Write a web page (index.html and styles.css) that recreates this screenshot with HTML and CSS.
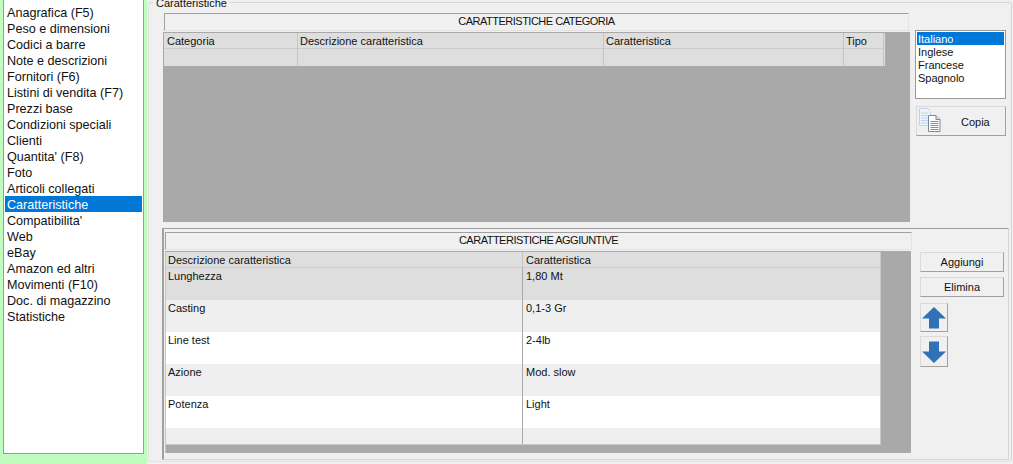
FILE: index.html
```html
<!DOCTYPE html>
<html lang="it">
<head>
<meta charset="utf-8">
<title>Caratteristiche</title>
<link rel="stylesheet" href="styles.css">
</head>
<body>
<div class="app">
  <aside class="sidebar">
    <ul class="nav">
      <li>Anagrafica (F5)</li>
      <li>Peso e dimensioni</li>
      <li>Codici a barre</li>
      <li>Note e descrizioni</li>
      <li>Fornitori (F6)</li>
      <li>Listini di vendita (F7)</li>
      <li>Prezzi base</li>
      <li>Condizioni speciali</li>
      <li>Clienti</li>
      <li>Quantita' (F8)</li>
      <li>Foto</li>
      <li>Articoli collegati</li>
      <li class="selected">Caratteristiche</li>
      <li>Compatibilita'</li>
      <li>Web</li>
      <li>eBay</li>
      <li>Amazon ed altri</li>
      <li>Movimenti (F10)</li>
      <li>Doc. di magazzino</li>
      <li>Statistiche</li>
    </ul>
  </aside>
  <main class="main">
    <section class="outer">
      <span class="legend">Caratteristiche</span>
      <div class="upper">
        <div class="upper-left">
          <div class="band band-up">CARATTERISTICHE CATEGORIA</div>
          <div class="table table-up">
            <div class="grid grid-up">
              <div class="th">Categoria</div><div class="th">Descrizione caratteristica</div><div class="th">Caratteristica</div><div class="th">Tipo</div>
              <div class="td-e"></div><div class="td-e"></div><div class="td-e"></div><div class="td-e"></div>
            </div>
          </div>
        </div>
        <div class="upper-right">
          <ul class="langs">
            <li class="selected">Italiano</li>
            <li>Inglese</li>
            <li>Francese</li>
            <li>Spagnolo</li>
          </ul>
          <button class="btn btn-copy" type="button">
            <svg class="copy-icon" width="22" height="24" viewBox="0 0 22 24" aria-hidden="true">
              <path d="M.5.5h8l3 3v14h-11z" fill="#eef4fa" stroke="#c3d3e3"/>
              <path d="M2 5h7M2 7.500h7M2 10h7M2 12.500h7M2 15h7" stroke="#bcd4ec"/>
              <path d="M9.500 7.500h7.500l4 4v12h-11.500z" fill="#fff" stroke="#76899c"/>
              <path d="M17 7.500v4h4" fill="#dbe7f3" stroke="#76899c"/>
              <path d="M11.500 13.500h8M11.500 15.500h8M11.500 17.500h8M11.500 19.500h8M11.500 21.500h8" stroke="#5f93c9"/>
            </svg>
            <span class="copy-label">Copia</span>
          </button>
        </div>
      </div>
      <div class="lower">
        <div class="lower-left">
          <div class="band band-low">CARATTERISTICHE AGGIUNTIVE</div>
          <div class="table table-low">
            <div class="grid grid-low">
              <div class="th">Descrizione caratteristica</div><div class="th">Caratteristica</div>
              <div class="td r-sel">Lunghezza</div><div class="td r-sel">1,80 Mt</div>
              <div class="td r-alt">Casting</div><div class="td r-alt">0,1-3 Gr</div>
              <div class="td r-w">Line test</div><div class="td r-w">2-4lb</div>
              <div class="td r-alt">Azione</div><div class="td r-alt">Mod. slow</div>
              <div class="td r-w">Potenza</div><div class="td r-w">Light</div>
              <div class="td r-last"></div><div class="td r-last"></div>
            </div>
          </div>
        </div>
        <div class="lower-right">
          <button class="btn btn-act" type="button">Aggiungi</button>
          <button class="btn btn-act btn-del" type="button">Elimina</button>
          <button class="btn btn-arrow btn-up" type="button" aria-label="Su">
            <svg width="24" height="22" viewBox="0 0 24 22" aria-hidden="true"><path d="M12 0 24 11.500h-7v10h-10v-10h-7z" fill="#2f72b8"/></svg>
          </button>
          <button class="btn btn-arrow btn-down" type="button" aria-label="Giù">
            <svg width="24" height="22" viewBox="0 0 24 22" aria-hidden="true"><path d="M7 .5h10v10h7l-12 11.500-12-11.500h7z" fill="#2f72b8"/></svg>
          </button>
        </div>
      </div>
    </section>
  </main>
</div>
</body>
</html>
```
FILE: styles.css
```css
* { box-sizing: border-box; }
html, body { margin: 0; padding: 0; }
body {
  width: 1013px;
  height: 464px;
  overflow: hidden;
  background: #f0f0f0;
  font-family: "Liberation Sans", Arial, sans-serif;
  font-size: 11px;
  color: #111;
}
ul { list-style: none; margin: 0; padding: 0; }
.app { display: flex; height: 464px; }
.sidebar {
  width: 147px;
  flex: none;
  background: #c0fcc0;
  padding: 0 3px;
}
.nav {
  height: 454px;
  background: #fff;
  border: 1px solid #8ea58e;
  border-top: 0;
  padding: 4px 1px 0;
  font-size: 12.6px;
}
.nav li { height: 16px; line-height: 18px; padding-left: 2px; white-space: nowrap; }
.nav .selected { line-height: 16px; padding-top: 1px; }
.selected { background: #0078d7; color: #fff; }

.main { flex: 1; min-width: 0; }
.outer {
  position: relative;
  height: 460px;
  margin: 2px 1px 0 1px;
  border: 1px solid #d5d5d5;
  border-left-color: #e4e4e4;
  border-bottom-color: #e4e4e4;
  border-radius: 3px;
  padding: 10px 0 0 14px;
}
.legend {
  position: absolute;
  left: 4px;
  top: -7px;
  padding: 0 3px;
  background: #f0f0f0;
  font-size: 11px;
  line-height: 14px;
}
.upper { display: flex; height: 208px; }
.upper-left { width: 747px; flex: none; }
.band {
  height: 18px;
  line-height: 14px;
  text-align: center;
  background: #f0f0f0;
  border: 1px solid #e3e3e3;
  border-top-color: #a0a0a0;
  border-left-color: #a0a0a0;
  font-size: 11px;
  letter-spacing: -.5px;
}
.band-up { margin: 0 1px; }
.table { background: #a9a9a9; }
.table-up { height: 190px; margin-top: 1px; padding: 1px 0 0 1px; }
.grid { display: grid; }
.grid-up { grid-template-columns: 134px 306px 240px 40px; width: 721px; background: #dedede; }
.th, .td, .td-e { padding-left: 2px; font-size: 11px; line-height: 16px; white-space: nowrap; }
.grid-up > .th:first-child { padding-left: 3px; }
.th { height: 16px; background: #dedede; border-right: 1px solid #c4c4c4; border-bottom: 1px solid #cdcdcd; }
.td-e { height: 17px; background: #dedede; border-right: 1px solid #c4c4c4; }
.upper-right { margin-left: 5px; padding-top: 17px; width: 91px; }
.langs {
  height: 69px;
  background: #fff;
  border: 1px solid #9a9a9a;
  padding: 1px;
  font-size: 11px;
}
.langs li { height: 13px; line-height: 14px; padding-left: 1px; }
.btn {
  display: block;
  padding: 0;
  background: #f0f0f0;
  border: 1px solid #dadada;
  border-right-color: #a0a0a0;
  border-bottom-color: #a0a0a0;
  font-family: inherit;
  font-size: 11px;
  color: #111;
}
.btn-copy {
  position: relative;
  width: 90px;
  height: 30px;
  margin: 7px 0 0 1px;
  padding-top: 2px;
  text-align: left;
}
.copy-icon { position: absolute; left: 2px; top: 1px; }
.copy-label { display: block; margin-left: 44px; }

.lower {
  display: flex;
  height: 232px;
  margin: 7px 2px 0 -1px;
  border: 1px solid #d5d5d5;
  border-top-color: #a0a0a0;
  border-left: 2px solid #a0a0a0;
  padding: 3px 0 0 1px;
}
.lower-left { width: 747px; flex: none; }
.band-low { margin: 0; }
.table-low {
  width: 746px;
  height: 202px;
  margin-top: 1px;
  padding-top: 1px;
  border-left: 1px solid #c4c4c4;
}
.grid-low {
  grid-template-columns: 357px 357px;
  width: 715px;
  background: #efefef;
  border-right: 1px solid #c8c8c8;
  border-bottom: 1px solid #c8c8c8;
}
.grid-low > .th:nth-child(2n), .grid-low > .td:nth-child(2n) { border-right: 0; padding-left: 3px; }
.td { height: 32px; border-right: 1px solid #a8a8a8; }
.r-sel { background: #dedede; }
.r-alt { background: #efefef; }
.r-w { background: #fff; }
.r-last { height: 16px; background: #efefef; }
.lower-right { width: 84px; margin-left: 8px; padding-top: 20px; }
.btn-act { width: 84px; height: 20px; }
.btn-del { margin-top: 5px; }
.btn-arrow {
  width: 28px;
  display: flex;
  align-items: center;
  justify-content: center;
}
.btn-up { height: 29px; margin-top: 6px; }
.btn-down { height: 31px; margin-top: 4px; }
```
